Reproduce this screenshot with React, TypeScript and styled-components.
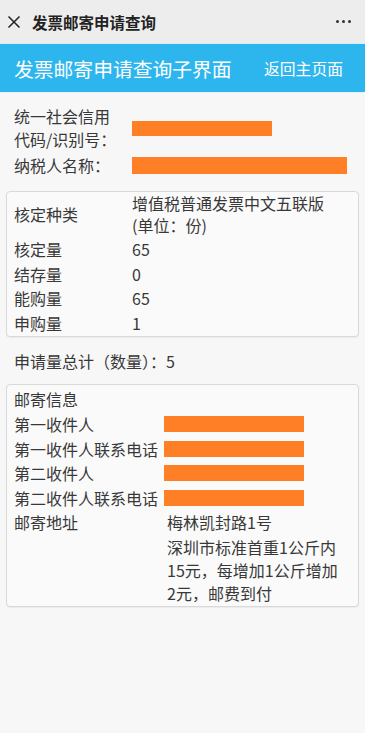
import React from 'react';
import styled, { createGlobalStyle } from 'styled-components';

const GlobalStyle = createGlobalStyle`
  html, body {
    margin: 0;
    padding: 0;
    background: #f7f7f7;
  }
  body {
    font-family: "Noto Sans CJK SC", "Noto Sans", sans-serif;
    color: #383838;
  }
`;

const Page = styled.div`
  width: 365px;
  min-height: 733px;
  background: #f7f7f7;
`;

const TopBar = styled.div`
  height: 43px;
  background: #ededed;
  display: flex;
  align-items: center;
  padding: 0 14px 0 7px;
  box-sizing: border-box;
`;

const TopTitle = styled.div`
  flex: 1;
  margin-left: 11px;
  font-size: 15.5px;
  font-weight: 700;
  color: #222;
`;

const Dots = styled.div`
  display: flex;
  gap: 3px;
  span {
    width: 3px;
    height: 3px;
    border-radius: 50%;
    background: #333;
  }
`;

const Header = styled.div`
  height: 50px;
  background: #2db6ee;
  border-top: 1px solid #d6eef8;
  border-bottom: 1px solid #dff3fb;
  display: flex;
  align-items: center;
  justify-content: space-between;
  padding: 0 22px 0 14px;
  box-sizing: border-box;
  color: #fff;
`;

const HeaderTitle = styled.div`
  font-size: 19.8px;
`;

const BackLink = styled.div`
  font-size: 15.8px;
`;

const Content = styled.div`
  padding: 12px 6px 0 6px;
`;

const InfoGrid = styled.div`
  display: grid;
  grid-template-columns: 118px 1fr;
  padding: 0 8px;
  font-size: 16px;
  line-height: 23px;
  align-items: center;
`;

const Bar = styled.div<{ $w: number; $h?: number }>`
  width: ${(p) => p.$w}px;
  height: ${(p) => p.$h ?? 16}px;
  background: #ff7f27;
`;

const Box = styled.div<{ $top: number; $pt?: number }>`
  margin-top: ${(p) => p.$top}px;
  border: 1px solid #d9d9d9;
  border-radius: 4px;
  background: #fafafa;
  box-shadow: 0 1px 1px rgba(0, 0, 0, 0.05);
  padding: ${(p) => p.$pt ?? 0}px 7px 1px 7px;
  font-size: 16px;
`;

const Row = styled.div<{ $label: number; $h?: number }>`
  display: grid;
  grid-template-columns: ${(p) => p.$label}px 1fr;
  align-items: center;
  min-height: ${(p) => p.$h ?? 24.6}px;
  line-height: 24.6px;
`;

const Multi = styled.div`
  line-height: 21.5px;
`;

const Total = styled.div`
  padding: 12px 8px 0 8px;
  font-size: 16px;
  line-height: 25px;
`;

const AddrValue = styled.div`
  padding-left: 3px;
`;

const Fee = styled.div`
  margin-top: 1px;
  line-height: 23px;
  padding-left: 3px;
`;

const CloseIcon = () => (
  <svg width="14" height="14" viewBox="0 0 14 14">
    <path d="M1.5 1.5 L12.5 12.5 M12.5 1.5 L1.5 12.5" stroke="#222" strokeWidth="1.5" fill="none" />
  </svg>
);

export default function App() {
  return (
    <Page>
      <GlobalStyle />
      <TopBar>
        <CloseIcon />
        <TopTitle>发票邮寄申请查询</TopTitle>
        <Dots>
          <span />
          <span />
          <span />
        </Dots>
      </TopBar>
      <Header>
        <HeaderTitle>发票邮寄申请查询子界面</HeaderTitle>
        <BackLink>返回主页面</BackLink>
      </Header>
      <Content>
        <InfoGrid>
          <div>
            统一社会信用
            <br />
            代码/识别号：
          </div>
          <Bar $w={140} $h={15} />
          <div style={{ marginTop: 3 }}>纳税人名称：</div>
          <Bar $w={215} $h={17} style={{ marginTop: 3 }} />
        </InfoGrid>
        <Box $top={14}>
          <Row $label={118} $h={45}>
            <div>核定种类</div>
            <Multi>
              增值税普通发票中文五联版
              <br />
              (单位：份)
            </Multi>
          </Row>
          <Row $label={118}>
            <div>核定量</div>
            <div>65</div>
          </Row>
          <Row $label={118}>
            <div>结存量</div>
            <div>0</div>
          </Row>
          <Row $label={118}>
            <div>能购量</div>
            <div>65</div>
          </Row>
          <Row $label={118}>
            <div>申购量</div>
            <div>1</div>
          </Row>
        </Box>
        <Total>申请量总计（数量）：5</Total>
        <Box $top={10} $pt={2}>
          <Row $label={150}>
            <div>邮寄信息</div>
            <div />
          </Row>
          <Row $label={150}>
            <div>第一收件人</div>
            <Bar $w={140} />
          </Row>
          <Row $label={150}>
            <div>第一收件人联系电话</div>
            <Bar $w={140} />
          </Row>
          <Row $label={150}>
            <div>第二收件人</div>
            <Bar $w={140} />
          </Row>
          <Row $label={150}>
            <div>第二收件人联系电话</div>
            <Bar $w={140} />
          </Row>
          <Row $label={150}>
            <div>邮寄地址</div>
            <AddrValue>梅林凯封路1号</AddrValue>
          </Row>
          <Row $label={150}>
            <div />
            <Fee>
              深圳市标准首重1公斤内
              <br />
              15元，每增加1公斤增加
              <br />
              2元，邮费到付
            </Fee>
          </Row>
        </Box>
      </Content>
    </Page>
  );
}
